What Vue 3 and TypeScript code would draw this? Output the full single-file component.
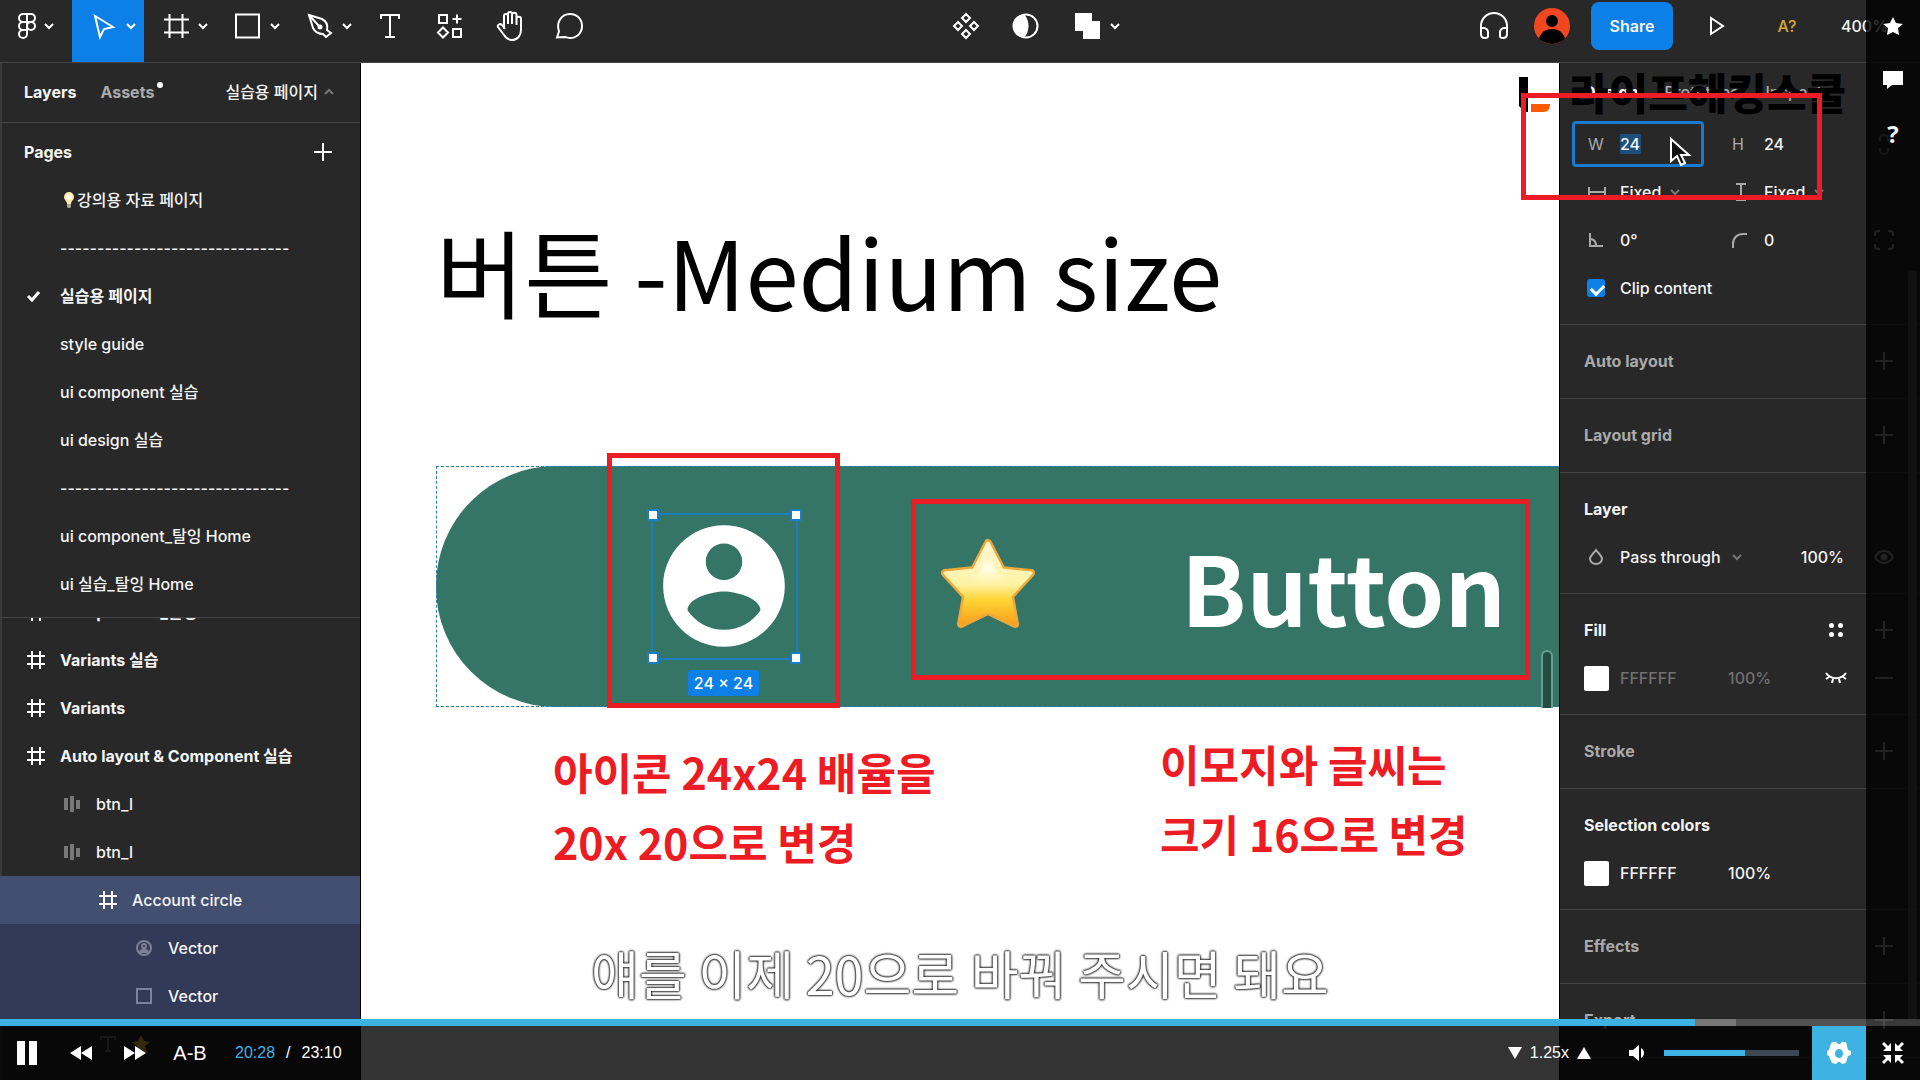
<script setup lang="ts">
import { ref } from 'vue'

interface Page { name: string; current?: boolean; bulb?: boolean }
interface Layer { name: string; icon: string; level: number; bold?: boolean; state?: string }

const divider = '-------------------------------'
const pages: Page[] = [
  { name: '강의용 자료 페이지', bulb: true },
  { name: divider },
  { name: '실습용 페이지', current: true },
  { name: 'style guide' },
  { name: 'ui component 실습' },
  { name: 'ui design 실습' },
  { name: divider },
  { name: 'ui component_탈잉 Home' },
  { name: 'ui 실습_탈잉 Home' },
]
const layers: Layer[] = [
  { name: 'Components_탈잉', icon: 'frame', level: 0, bold: true },
  { name: 'Variants 실습', icon: 'frame', level: 0, bold: true },
  { name: 'Variants', icon: 'frame', level: 0, bold: true },
  { name: 'Auto layout & Component 실습', icon: 'frame', level: 0, bold: true },
  { name: 'btn_l', icon: 'auto', level: 1 },
  { name: 'btn_l', icon: 'auto', level: 1 },
  { name: 'Account circle', icon: 'frame', level: 2, state: 'selected' },
  { name: 'Vector', icon: 'account', level: 3, state: 'child' },
  { name: 'Vector', icon: 'square', level: 3, state: 'child' },
  { name: '', icon: 'text', level: 2 },
]
const width = ref('24')
const height = ref('24')
const rotation = ref('0°')
const radius = ref('0')
const clip = ref(true)
const volume = ref(60)
</script>

<template>
  <div class="app">
    <header class="toolbar">
      <div class="tools">
        <button class="tool drop" aria-label="Main menu">
          <svg width="18" height="26" viewBox="0 0 18 26" class="line"><path d="M9 1H5a4 4 0 0 0 0 8h4zM9 1h4a4 4 0 0 1 0 8H9zM9 9H5a4 4 0 0 0 0 8h4zM9 17H5a4 4 0 1 0 4 4z" /><circle cx="13" cy="13" r="4" /></svg>
          <svg width="10" height="6" viewBox="0 0 10 6" class="line"><path d="M1 1l4 4 4-4" /></svg>
        </button>
        <button class="tool drop active" aria-label="Move">
          <svg width="28" height="26" viewBox="0 0 28 26" class="line"><path d="M5 3l18 11-9 2-4 8z" /></svg>
          <svg width="10" height="6" viewBox="0 0 10 6" class="line"><path d="M1 1l4 4 4-4" /></svg>
        </button>
        <button class="tool drop" aria-label="Frame">
          <svg width="28" height="26" viewBox="0 0 28 26" class="line"><path d="M7.500 1v24M20.500 1v24M2 6.500h25M2 19.500h25" /></svg>
          <svg width="10" height="6" viewBox="0 0 10 6" class="line"><path d="M1 1l4 4 4-4" /></svg>
        </button>
        <button class="tool drop" aria-label="Rectangle">
          <svg width="28" height="26" viewBox="0 0 28 26" class="line"><rect x="2" y="1.500" width="23" height="23" /></svg>
          <svg width="10" height="6" viewBox="0 0 10 6" class="line"><path d="M1 1l4 4 4-4" /></svg>
        </button>
        <button class="tool drop" aria-label="Pen">
          <svg width="28" height="26" viewBox="0 0 28 26" class="line"><path d="M3 2l13 4c4 2 6 6 5 11l4 3-5 4-3-3c-5 0-8-2-10-6z" /><path d="M3 2l10 11" /><circle cx="14" cy="14" r="1.500" fill="#fff" /></svg>
          <svg width="10" height="6" viewBox="0 0 10 6" class="line"><path d="M1 1l4 4 4-4" /></svg>
        </button>
        <button class="tool" aria-label="Text">
          <svg width="22" height="26" viewBox="0 0 22 26" class="line"><path d="M2 6V2h18v4M11 2v22M6 24h10" /></svg>
        </button>
        <button class="tool" aria-label="Resources">
          <svg width="28" height="26" viewBox="0 0 28 26" class="line"><path d="M3 2h8v8H3zM17 16h8v8h-8zM7 14.500l5 5-5 5-5-5zM21 1.500v9M16.500 6h9" /></svg>
        </button>
        <button class="tool" aria-label="Hand">
          <svg width="30" height="32" viewBox="0 0 30 32" class="line"><path d="M9 19V6a2 2 0 0 1 4 0M13 14V4a2 2 0 0 1 4 0v10M17 14V5a2 2 0 0 1 4.500 0v10M21.500 14V9a2 2 0 0 1 4.500 0v11c0 6-4 10-9 10-4 0-6-2-8-5l-6-8c-1-2 2-4 4-2l3 4" /></svg>
        </button>
        <button class="tool" aria-label="Comment">
          <svg width="28" height="26" viewBox="0 0 28 26" class="line"><path d="M1 24.500l2-6C0 10 5 1 14 1c7 0 12 5 12 12s-5 12-12 12c-2 0-4-1-5-1z" /></svg>
        </button>
      </div>

      <div class="tools">
        <button class="tool" aria-label="Create component">
          <svg width="28" height="28" viewBox="0 0 28 28" class="line"><path d="M14 2l4 4-4 4-4-4zM14 18l4 4-4 4-4-4zM6 10l4 4-4 4-4-4zM22 10l4 4-4 4-4-4z" /></svg>
        </button>
        <button class="tool" aria-label="Use as mask">
          <svg width="26" height="26" viewBox="0 0 26 26"><circle cx="13" cy="13" r="11.500" class="line" /><path d="M11 1.500a11.500 11.500 0 0 0 0 23c6-5 6-18 0-23z" fill="#fff" /></svg>
        </button>
        <button class="tool drop" aria-label="Union selection">
          <svg width="28" height="26" viewBox="0 0 28 26"><path d="M1 0h17v8h8v18H9v-8H1z" fill="#fff" /></svg>
          <svg width="10" height="6" viewBox="0 0 10 6" class="line"><path d="M1 1l4 4 4-4" /></svg>
        </button>
      </div>

      <div class="tools">
        <button class="tool" aria-label="Audio">
          <svg width="30" height="28" viewBox="0 0 30 28" class="line"><path d="M2 18v-4a13 13 0 0 1 26 0v4M2 16h3c2 0 4 2 4 4v4c0 2-1 2-3 2-3 0-4-2-4-4zM28 16h-3c-2 0-4 2-4 4v4c0 2 1 2 3 2 3 0 4-2 4-4z" /></svg>
        </button>
        <div class="avatar-cell">
          <svg width="36" height="36" viewBox="0 0 36 36" role="img" aria-label="Account"><circle cx="18" cy="18" r="18" fill="#f24822" /><circle cx="18" cy="13" r="6" fill="#000" /><path d="M5 30.500C7 24 12 21 18 21s11 3 13 9.500A18 18 0 0 1 5 30.500z" fill="#000" /></svg>
        </div>
        <button class="share">Share</button>
        <button class="tool play" aria-label="Present">
          <svg width="16" height="20" viewBox="0 0 16 20" class="line"><path d="M2 2l12 8-12 8z" /></svg>
        </button>
        <button class="tool missing">A?</button>
        <button class="zoom">400%</button>
      </div>
    </header>

    <div class="body">
      <aside class="left">
        <nav class="tabs">
          <button class="strong">Layers</button>
          <button class="strong muted assets">Assets<i class="dot"></i></button>
          <button class="page-name">실습용 페이지
            <svg width="10" height="6" viewBox="0 0 10 6" class="line dim"><path d="M1 5l4-4 4 4" /></svg>
          </button>
        </nav>
        <section class="pages">
          <div class="pages-head">
            <h2>Pages</h2>
            <button aria-label="Add page"><svg width="18" height="18" viewBox="0 0 18 18" class="line"><path d="M9 0v18M0 9h18" /></svg></button>
          </div>
          <ul>
            <li v-for="(p, i) in pages" :key="i" class="row">
              <span class="cell">
                <svg v-if="p.current" width="20" height="10" viewBox="0 0 20 10" class="line check"><path d="M2 5l4 4 7-8" /></svg>
              </span>
              <span class="row-name" :class="{ current: p.current }">
                <svg v-if="p.bulb" width="17" height="18" viewBox="0 0 17 18"><path d="M9 1a5 5 0 0 0-5 5c0 3 3 4 3 7h4c0-3 3-4 3-7a5 5 0 0 0-5-5z" fill="#ffe9a8" /><circle cx="9" cy="6" r="3" fill="#fffbe6" /><path d="M7 13h4v3l-1 1H8l-1-1z" fill="#a9a49a" /></svg>{{ p.name }}
              </span>
            </li>
          </ul>
        </section>
        <section class="layers">
          <ul>
            <li v-for="(l, i) in layers" :key="i" class="row" :class="[l.state, 'level-' + l.level]">
              <span class="cell">
                <svg v-if="l.icon === 'frame'" width="18" height="18" viewBox="0 0 18 18" class="line"><path d="M5 0v18M13 0v18M0 5h18M0 13h18" /></svg>
                <svg v-else-if="l.icon === 'auto'" width="16" height="16" viewBox="0 0 16 16" fill="#777"><path d="M0 2h4v12H0zM6 0h4v16H6zM12 4h4v9h-4z" /></svg>
                <svg v-else-if="l.icon === 'account'" width="16" height="16" viewBox="0 0 16 16" class="line faded"><circle cx="8" cy="8" r="7" /><circle cx="8" cy="6" r="2" /><path d="M4 12c1-3 7-3 8 0z" /></svg>
                <svg v-else-if="l.icon === 'square'" width="16" height="16" viewBox="0 0 16 16" class="line faded"><path d="M1 1h14v14H1z" /></svg>
                <svg v-else width="16" height="16" viewBox="0 0 16 16" class="line dim"><path d="M1 4V1h14v3M8 1v14M5 15h6" /></svg>
              </span>
              <span class="row-name" :class="{ bold: l.bold }">{{ l.name }}
                <svg v-if="l.icon === 'text'" width="18" height="18" viewBox="0 0 18 18"><path d="M9 0l3 6 6 1-5 4 2 7-6-4-6 4 2-7-5-4 6-1z" fill="#ffcf3f" /></svg>
              </span>
            </li>
          </ul>
        </section>
      </aside>

      <main class="canvas">
        <h1 class="title">버튼 -Medium size</h1>
        <div class="frame"></div>
        <svg class="account" viewBox="0 0 24 24" fill="#fff"><path d="M12 2C6.480 2 2 6.480 2 12s4.480 10 10 10 10-4.480 10-10S17.520 2 12 2zm0 3c1.660 0 3 1.340 3 3s-1.340 3-3 3-3-1.340-3-3 1.340-3 3-3zm0 14.200c-2.500 0-4.710-1.280-6-3.220.03-1.990 4-3.080 6-3.080 1.990 0 5.970 1.090 6 3.080-1.290 1.940-3.500 3.220-6 3.220z" /></svg>
        <div class="selection"><i></i><i></i><i></i><i></i></div>
        <span class="size">24 × 24</span>
        <svg class="star" viewBox="0 0 96 92">
          <defs>
            <linearGradient id="starFill" x1="0" y1="0" x2="0" y2="1">
              <stop offset="0" stop-color="#fff6d0" /><stop offset=".5" stop-color="#fff3a8" /><stop offset=".7" stop-color="#ffd535" /><stop offset="1" stop-color="#f9a01e" />
            </linearGradient>
            <radialGradient id="starGlow" cx=".5" cy=".4" r=".4">
              <stop offset="0" stop-color="#fffff0" /><stop offset="1" stop-color="#fff8c0" stop-opacity="0" />
            </radialGradient>
          </defs>
          <path d="M48 5L62 32L91 35L70 58L75 86L48 73L21 86L26 58L5 35L34 32z" fill="url(#starFill)" stroke="#eda83c" stroke-width="8" stroke-linejoin="round" />
          <path d="M48 5L62 32L91 35L70 58L75 86L48 73L21 86L26 58L5 35L34 32z" fill="url(#starFill)" stroke="url(#starFill)" stroke-width="3" stroke-linejoin="round" />
          <path d="M48 14L58 36L82 39L64 55H32L14 39L38 36z" fill="url(#starGlow)" />
        </svg>
        <span class="label">Button</span>
        <i class="thumb"></i>
        <i class="mark mark-icon"></i>
        <i class="mark mark-text"></i>
        <p class="note note-icon">아이콘 24x24 배율을<br />20x 20으로 변경</p>
        <p class="note note-text">이모지와 글씨는<br />크기 16으로 변경</p>
      </main>

      <aside class="right">
        <section class="props">
          <nav class="prop-tabs"><button class="strong">Design</button><button>Prototype</button><button>Inspect</button></nav>
          <div class="grid">
            <label class="focus"><span>W</span><input v-model="width" aria-label="Width" /></label>
            <label><span>H</span><input v-model="height" aria-label="Height" /></label>
            <svg width="14" height="24" viewBox="0 0 14 24" class="line dim link"><path d="M3 9V7a4 4 0 0 1 8 0v2M3 16v2a4 4 0 0 0 8 0v-2" /></svg>
          </div>
          <div class="grid">
            <label><span><svg width="18" height="10" viewBox="0 0 18 10" class="line grey"><path d="M1 0v10M17 0v10M1 5h16" /></svg></span>
              <select aria-label="Horizontal resizing"><option>Fixed</option></select><svg width="10" height="6" viewBox="0 0 10 6" class="line dim"><path d="M1 1l4 4 4-4" /></svg></label>
            <label><span><svg width="14" height="18" viewBox="0 0 14 18" class="line grey"><path d="M4 1h10M4 17h10M9 1v16" /></svg></span>
              <select aria-label="Vertical resizing"><option>Fixed</option></select><svg width="10" height="6" viewBox="0 0 10 6" class="line dim"><path d="M1 1l4 4 4-4" /></svg></label>
          </div>
          <div class="grid">
            <label><span><svg width="15" height="14" viewBox="0 0 15 14" class="line grey"><path d="M2 0v13h13M2 6c4 0 6 3 6 7" /></svg></span><input v-model="rotation" aria-label="Rotation" /></label>
            <label><span><svg width="15" height="15" viewBox="0 0 15 15" class="line grey"><path d="M1 15v-4C1 5 5 1 11 1h4" /></svg></span><input v-model="radius" aria-label="Corner radius" /></label>
            <svg width="20" height="20" viewBox="0 0 20 20" class="line grey"><path d="M1 6V4a3 3 0 0 1 3-3h2M14 1h2a3 3 0 0 1 3 3v2M19 14v2a3 3 0 0 1-3 3h-2M6 19H4a3 3 0 0 1-3-3v-2" /></svg>
          </div>
          <label class="clip"><input v-model="clip" type="checkbox" /><span>Clip content</span></label>
        </section>

        <section class="block single"><div class="head off"><h2>Auto layout</h2><button aria-label="Add auto layout"><svg width="18" height="18" viewBox="0 0 18 18" class="line grey"><path d="M9 0v18M0 9h18" /></svg></button></div></section>
        <section class="block single"><div class="head off"><h2>Layout grid</h2><button aria-label="Add layout grid"><svg width="18" height="18" viewBox="0 0 18 18" class="line grey"><path d="M9 0v18M0 9h18" /></svg></button></div></section>

        <section class="block">
          <div class="head"><h2>Layer</h2></div>
          <div class="item">
            <svg width="14" height="16" viewBox="0 0 14 16" class="line grey drop-icon"><path d="M7 1C4 5 1 7 1 10a6 5 0 0 0 12 0c0-3-3-5-6-9z" /></svg>
            <select class="blend" aria-label="Blend mode"><option>Pass through</option></select>
            <svg width="10" height="6" viewBox="0 0 10 6" class="line dim"><path d="M1 1l4 4 4-4" /></svg>
            <span class="opacity">100%</span>
            <button aria-label="Toggle layer"><svg width="20" height="14" viewBox="0 0 20 14" class="line grey"><path d="M1 7c5-8 13-8 18 0-5 8-13 8-18 0z" /><circle cx="10" cy="7" r="2.500" fill="#aaa" /></svg></button>
          </div>
        </section>

        <section class="block">
          <div class="head">
            <h2>Fill</h2>
            <button aria-label="Styles"><svg width="16" height="16" viewBox="0 0 16 16" fill="#fff"><circle cx="3.500" cy="3.500" r="2.500" /><circle cx="12.500" cy="3.500" r="2.500" /><circle cx="3.500" cy="12.500" r="2.500" /><circle cx="12.500" cy="12.500" r="2.500" /></svg></button>
            <button aria-label="Add fill"><svg width="18" height="18" viewBox="0 0 18 18" class="line grey"><path d="M9 0v18M0 9h18" /></svg></button>
          </div>
          <div class="item faint">
            <i class="swatch"></i><span class="hex">FFFFFF</span><span class="alpha">100%</span>
            <button aria-label="Show fill"><svg width="22" height="12" viewBox="0 0 22 12" class="line"><path d="M1 1c5 7 15 7 20 0M4 5L1 7M8 7l-1 4M14 7l1 4M18 5l3 2" /></svg></button>
            <button aria-label="Remove fill"><svg width="18" height="18" viewBox="0 0 18 18" class="line grey"><path d="M0 9h18" /></svg></button>
          </div>
        </section>

        <section class="block single"><div class="head off"><h2>Stroke</h2><button aria-label="Add stroke"><svg width="18" height="18" viewBox="0 0 18 18" class="line grey"><path d="M9 0v18M0 9h18" /></svg></button></div></section>

        <section class="block">
          <div class="head"><h2>Selection colors</h2></div>
          <div class="item"><i class="swatch"></i><span class="hex">FFFFFF</span><span class="alpha">100%</span></div>
        </section>

        <section class="block single"><div class="head off"><h2>Effects</h2><button aria-label="Add effect"><svg width="18" height="18" viewBox="0 0 18 18" class="line grey"><path d="M9 0v18M0 9h18" /></svg></button></div></section>
        <section class="block single"><div class="head off"><h2>Export</h2><button aria-label="Add export"><svg width="18" height="18" viewBox="0 0 18 18" class="line grey"><path d="M9 0v18M0 9h18" /></svg></button></div></section>
        <i class="scrollbar"></i>
      </aside>
    </div>

    <div class="brand">
      <svg width="34" height="36" viewBox="0 0 34 36"><path d="M1 0h9v35H7l-6-6z" fill="#000" /><path d="M13 27h19c0 5-2 8-7 8H13z" fill="#ff5a00" /></svg>
      <span>라이프해킹스쿨</span>
    </div>
    <i class="mark mark-size"></i>
    <svg class="pointer" width="22" height="30" viewBox="0 0 22 30"><path d="M2 2v22l6-5 4 9 4-2-4-8h8z" fill="#111" stroke="#fff" stroke-width="2" /></svg>

    <div class="rail">
      <button aria-label="Bookmark"><svg width="20" height="18" viewBox="0 0 20 18" fill="#fff"><path d="M10 0l3 6 7 1-5 4 1 7-6-3-6 3 1-7-5-4 7-1z" /></svg></button>
      <button aria-label="Note"><svg width="20" height="18" viewBox="0 0 20 18" fill="#fff"><path d="M0 0h20v14H9l-5 4v-4H0z" /></svg></button>
      <button class="help">?</button>
    </div>

    <p class="caption">얘를 이제 20으로 바꿔 주시면 돼요</p>

    <footer class="player">
      <div class="progress" role="progressbar" aria-valuenow="88" aria-valuemin="0" aria-valuemax="100"><i class="buffered"></i><i class="played"></i></div>
      <div class="controls">
        <button class="pause" aria-label="Pause"><svg width="20" height="24" viewBox="0 0 20 24" fill="#fff"><path d="M0 0h8v24H0zM12 0h8v24h-8z" /></svg></button>
        <button class="seek" aria-label="Rewind"><svg width="22" height="14" viewBox="0 0 22 14" fill="#fff"><path d="M11 0v14L0 7zM22 0v14L11 7z" /></svg></button>
        <button class="seek" aria-label="Forward"><svg width="22" height="14" viewBox="0 0 22 14" fill="#fff"><path d="M0 0v14l11-7zM11 0v14l11-7z" /></svg></button>
        <button class="ab">A-B</button>
        <span class="time"><b>20:28</b><span>/</span><span>23:10</span></span>
        <div class="speed">
          <button aria-label="Slower"><svg width="14" height="12" viewBox="0 0 14 12" fill="#fff"><path d="M0 0h14L7 12z" /></svg></button>
          <span>1.25x</span>
          <button aria-label="Faster"><svg width="14" height="12" viewBox="0 0 14 12" fill="#fff"><path d="M0 12h14L7 0z" /></svg></button>
        </div>
        <button class="mute" aria-label="Mute"><svg width="16" height="16" viewBox="0 0 16 16" fill="#fff"><path d="M0 5h4l6-5v16l-6-5H0zM12 3c4 2 4 8 0 10z" /></svg></button>
        <input v-model="volume" class="volume" type="range" min="0" max="100" aria-label="Volume" />
        <button class="square settings" aria-label="Settings"><svg width="24" height="24" viewBox="0 0 24 24"><path fill="#fff" fill-rule="evenodd" d="M5 1h4l2 2h2l2-2h4l1 4 1 4 3 1v4l-3 1-1 3-1 4-4 1-2-2h-2l-2 2-4-1-2-4-1-3-2-1v-4l2-1 1-4zM12 8a4 4.500 0 1 0 0 9 4 4.500 0 0 0 0-9z" /></svg></button>
        <button class="square" aria-label="Exit full screen"><svg width="22" height="22" viewBox="0 0 22 22" fill="#fff"><path d="M9 9H1l3-3-4-4 2-2 4 4 3-3zM13 9h8l-3-3 4-4-2-2-4 4-3-3zM9 13H1l3 3-4 4 2 2 4-4 3 3zM13 13h8l-3 3 4 4-2 2-4-4-3 3z" /></svg></button>
      </div>
    </footer>
  </div>
</template>

<style>
body { margin: 0; background: #282829; }
</style>

<style scoped>
* { box-sizing: border-box; }
.app { position: relative; display: flex; flex-direction: column; height: 100vh; overflow: hidden; background: #282829; color: #f4f4f4; font: 500 16px/24px Inter, "Noto Sans CJK KR", sans-serif; }
button, input, select { font: inherit; color: inherit; background: none; border: 0; padding: 0; margin: 0; appearance: none; border-radius: 0; }
button { display: flex; align-items: center; justify-content: center; flex: none; }
svg { display: block; flex: none; overflow: visible; }
ul, p, h1, h2 { margin: 0; padding: 0; list-style: none; }
h2 { font: inherit; font-weight: 700; flex: 1; }
.line { fill: none; stroke: #fff; stroke-width: 2; }
.dim { stroke: #777; }
.grey { stroke: #aaa; }
.faded { stroke: #7c8199; }
.strong { font-weight: 700; }
.muted { color: #aaa; }

.toolbar { display: flex; justify-content: space-between; flex: none; height: 63px; border-bottom: 1px solid #444445; }
.tools { display: flex; height: 62px; }
.tool { width: 60px; height: 62px; padding-bottom: 10px; }
.drop { width: 72px; padding-left: 18px; gap: 8px; justify-content: flex-start; }
.active { background: #0d80e8; }
.avatar-cell { width: 56px; display: flex; justify-content: center; padding-top: 8px; }
.share { width: 82px; height: 48px; margin: 2px 12px 0 11px; border-radius: 8px; background: #0d80e8; font-weight: 600; }
.play { width: 64px; }
.missing { width: 76px; color: #d6a83a; }
.zoom { width: 95px; height: 52px; padding-left: 16px; justify-content: flex-start; }

.body { display: flex; flex: 1; min-height: 0; }
.left { display: flex; flex-direction: column; flex: none; width: 361px; border-right: 1px solid #000; box-shadow: inset 2px 0 #39393a; }
.tabs { display: flex; align-items: center; flex: none; height: 60px; padding: 0 26px 2px 24px; gap: 24px; border-bottom: 1px solid #444445; }
.assets { align-items: flex-start; gap: 3px; }
.dot { width: 6px; height: 6px; border-radius: 50%; background: #fff; margin-top: 2px; }
.page-name { margin-left: auto; gap: 6px; }
.pages { flex: none; height: 495px; border-bottom: 1px solid #444445; }
.pages-head { display: flex; align-items: center; height: 53px; padding: 5px 28px 0 24px; }
.row { display: flex; align-items: center; gap: 12px; height: 48px; padding-left: 24px; white-space: nowrap; }
.cell { display: flex; align-items: center; justify-content: center; width: 24px; flex: none; }
.check { stroke-width: 3; }
.row-name { display: flex; align-items: center; font-weight: 500; }
.current { font-weight: 600; }
.bold { font-weight: 700; }
.layers { flex: 1; min-height: 0; overflow: hidden; }
.layers ul { margin-top: -30px; }
.level-1 { padding-left: 60px; }
.level-2 { padding-left: 96px; }
.level-3 { padding-left: 132px; }
.selected { background: #434f70; }
.child { background: #333a57; }

.canvas { position: relative; flex: 1; min-width: 0; overflow: hidden; background: #fff; color: #000; }
.canvas > * { position: absolute; }
.title { left: 75px; top: 159px; font: 400 96px/96px "Noto Sans CJK KR", sans-serif; white-space: nowrap; }
.frame { left: 75px; top: 403px; right: -200px; height: 241px; border-radius: 120px; background: #357565; }
.frame::before { content: ""; position: absolute; inset: 0; border: 1px dashed #2a7fb8; }
.account { left: 290px; top: 450px; width: 146px; height: 146px; }
.selection { left: 290px; top: 450px; width: 147px; height: 147px; border: 2px solid #1c7cc0; }
.selection i { position: absolute; width: 12px; height: 12px; background: #fff; border: 2px solid #1c7cc0; }
.selection i:nth-child(1) { left: -6px; top: -6px; }
.selection i:nth-child(2) { right: -6px; top: -6px; }
.selection i:nth-child(3) { left: -6px; bottom: -6px; }
.selection i:nth-child(4) { right: -6px; bottom: -6px; }
.size { left: 327px; top: 607px; width: 71px; height: 26px; border-radius: 3px; background: #0d80e8; color: #fff; line-height: 26px; text-align: center; white-space: nowrap; }
.star { left: 579px; top: 475px; width: 96px; height: 92px; }
.label { left: 820px; top: 475px; font: 700 96px/96px "Noto Sans CJK KR", sans-serif; color: #fff; }
.thumb { right: 6px; top: 587px; width: 12px; height: 58px; border: 2px solid #6a9e90; border-bottom: 0; border-radius: 6px 6px 0 0; background: #234d43; }
.mark { border: 5px solid #ed1c24; }
.mark-icon { left: 246px; top: 390px; width: 233px; height: 255px; }
.mark-text { left: 550px; top: 436px; width: 619px; height: 181px; }
.note { color: #ed1c24; font: 700 43px/70px "Noto Sans CJK KR", sans-serif; white-space: nowrap; }
.note-icon { left: 192px; top: 673px; }
.note-text { left: 799px; top: 665px; }

.right { position: relative; flex: none; width: 361px; overflow: hidden; border-left: 1px solid #000; }
.props { height: 262px; padding-left: 24px; border-bottom: 1px solid #444445; }
.prop-tabs { display: flex; align-items: center; gap: 26px; height: 57px; color: #aaa; }
.prop-tabs .strong { color: #fff; }
.grid { display: grid; grid-template-columns: 144px 144px 24px; align-items: center; justify-items: center; height: 48px; }
.grid label { display: flex; align-items: center; justify-self: stretch; height: 46px; position: relative; }
.grid label > span { width: 36px; color: #aaa; font-weight: 400; padding-left: 4px; }
.grid input { width: 72px; }
.grid select { width: 50px; }
.focus::before { content: ""; position: absolute; inset: 0 24px 0 -12px; border: 3px solid #1a7ad0; border-radius: 4px; }
.focus input { width: 21px; line-height: 20px; background: #1d4f7a; }
.clip { display: flex; align-items: center; height: 48px; gap: 15px; }
.clip input { width: 18px; height: 18px; margin-left: 3px; border-radius: 3px; background: #0d80e8; position: relative; }
.clip input:checked::after { content: ""; position: absolute; left: 6px; top: 3px; width: 6px; height: 10px; border: solid #fff; border-width: 0 3px 3px 0; transform: rotate(45deg); }
.block { padding: 12px 12px 12px 24px; border-bottom: 1px solid #444445; }
.single { padding-bottom: 13px; }
.head, .item { display: flex; align-items: center; height: 48px; }
.head button, .item button { width: 48px; height: 48px; }
.off { color: #aaa; }
.drop-icon { margin: 0 17px 0 5px; }
.blend { width: 112px; }
.opacity { margin-left: auto; margin-right: 16px; }
.swatch { width: 25px; height: 25px; margin-right: 11px; border-radius: 2px; background: #fff; }
.hex { width: 108px; }
.alpha { width: 84px; }
.faint { color: #707070; }
.scrollbar { position: absolute; right: 3px; top: 208px; bottom: 60px; width: 9px; border-radius: 4px; background: #555; }

.brand { position: absolute; right: 74px; top: 77px; display: flex; align-items: flex-start; gap: 17px; color: #000; font: 900 43px/28px "Noto Sans CJK KR", sans-serif; }
.mark-size { position: absolute; right: 98px; top: 93px; width: 301px; height: 107px; }
.pointer { position: absolute; right: 229px; top: 137px; }
.rail { position: absolute; right: 0; top: 0; bottom: 54px; width: 54px; padding-top: 12px; background: rgba(0, 0, 0, .8); display: flex; flex-direction: column; gap: 26px; }
.rail button { width: 54px; height: 28px; }
.rail .help { font: 700 24px/28px "Open Sans", sans-serif; }
.caption { position: absolute; left: 0; right: 0; bottom: 79px; text-align: center; font: 400 52px/56px "Noto Sans CJK KR", sans-serif; color: #fff; text-shadow: 0 0 2px #222, 0 0 2px #222, 0 0 2px #222, 0 0 3px #444; }

.player { position: absolute; left: 0; right: 0; bottom: 0; font: 400 16px/24px "Liberation Sans", Arial, sans-serif; color: #fff; }
.progress { position: relative; height: 7px; background: rgba(255, 255, 255, .2); }
.progress i { position: absolute; left: 0; top: 0; bottom: 0; }
.buffered { width: 90.400%; background: #777; }
.played { width: 88.300%; background: #3fb2e4; }
.controls { display: flex; align-items: center; height: 54px; background: rgba(0, 0, 0, .8); }
.pause { width: 54px; height: 54px; }
.seek { width: 54px; height: 54px; }
.ab { width: 56px; height: 54px; font-size: 20px; }
.time { display: flex; gap: 11px; margin-left: 17px; }
.time b { font-weight: 400; color: #3fb2e4; }
.speed { display: flex; align-items: center; gap: 8px; margin-left: auto; }
.mute { margin-left: 38px; }
.volume { width: 135px; height: 6px; margin: 0 13px 0 19px; background: linear-gradient(to right, #3fb2e4 60%, #3d4856 60%); }
.volume::-webkit-slider-thumb { appearance: none; width: 1px; height: 6px; background: transparent; }
.square { width: 54px; height: 54px; }
.settings { background: #3fb2e4; }
</style>
